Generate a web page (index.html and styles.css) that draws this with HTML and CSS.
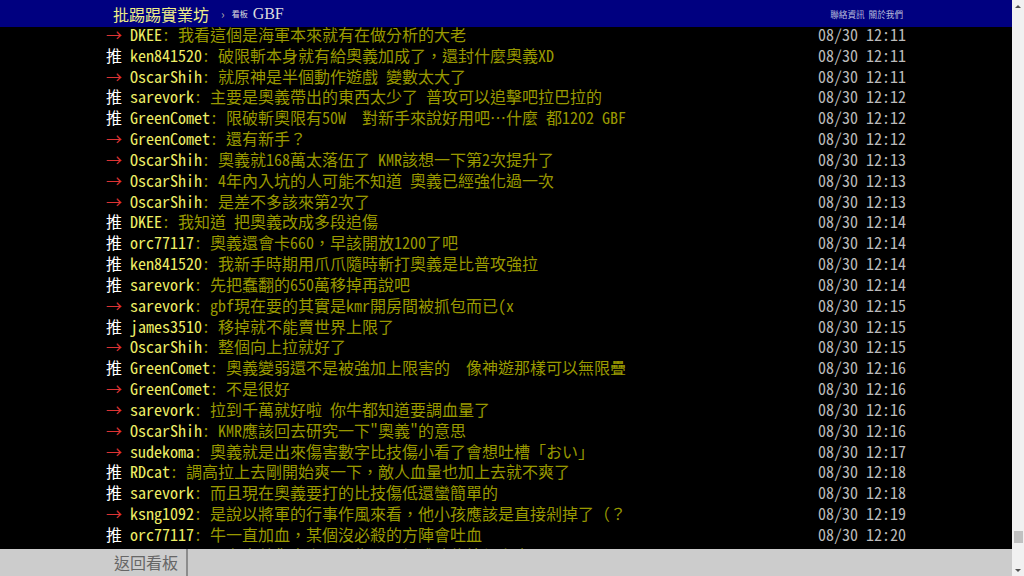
FILE: index.html
```html
<!DOCTYPE html>
<html lang="zh-Hant-TW">
<head>
  <meta charset="UTF-8">
  <meta name="viewport" content="width=device-width, initial-scale=1.0">
  <title>[閒聊] GBF 奧義 - 看板 GBF - 批踢踢實業坊</title>
  <link rel="stylesheet" href="styles.css">
</head>
<body>
  <div class="page">
    <div id="topbar-container">
      <div id="topbar">
        <a id="logo" href="#">批踢踢實業坊</a>
        <span class="sep">›</span>
        <a class="board" href="#"><span class="board-label">看板</span>GBF</a>
        <div class="right">
          <a href="#">聯絡資訊</a>
          <a href="#">關於我們</a>
        </div>
      </div>
    </div>

    <div id="main-container">
      <div id="main-content">
        <div class="push"><span class="f1 hl push-tag">→ </span><span class="f3 hl push-userid">DKEE</span><span class="f3 push-content">: 我看這個是海軍本來就有在做分析的大老</span><span class="push-ipdatetime"> 08/30 12:11</span></div>
        <div class="push"><span class="hl push-tag">推 </span><span class="f3 hl push-userid">ken841520</span><span class="f3 push-content">: 破限斬本身就有給奧義加成了，還封什麼奧義XD</span><span class="push-ipdatetime"> 08/30 12:11</span></div>
        <div class="push"><span class="f1 hl push-tag">→ </span><span class="f3 hl push-userid">OscarShih</span><span class="f3 push-content">: 就原神是半個動作遊戲 變數太大了</span><span class="push-ipdatetime"> 08/30 12:11</span></div>
        <div class="push"><span class="hl push-tag">推 </span><span class="f3 hl push-userid">sarevork</span><span class="f3 push-content">: 主要是奧義帶出的東西太少了 普攻可以追擊吧拉巴拉的</span><span class="push-ipdatetime"> 08/30 12:12</span></div>
        <div class="push"><span class="hl push-tag">推 </span><span class="f3 hl push-userid">GreenComet</span><span class="f3 push-content">: 限破斬奧限有50W  對新手來說好用吧…什麼 都1202 GBF</span><span class="push-ipdatetime"> 08/30 12:12</span></div>
        <div class="push"><span class="f1 hl push-tag">→ </span><span class="f3 hl push-userid">GreenComet</span><span class="f3 push-content">: 還有新手？</span><span class="push-ipdatetime"> 08/30 12:12</span></div>
        <div class="push"><span class="f1 hl push-tag">→ </span><span class="f3 hl push-userid">OscarShih</span><span class="f3 push-content">: 奧義就168萬太落伍了 KMR該想一下第2次提升了</span><span class="push-ipdatetime"> 08/30 12:13</span></div>
        <div class="push"><span class="f1 hl push-tag">→ </span><span class="f3 hl push-userid">OscarShih</span><span class="f3 push-content">: 4年內入坑的人可能不知道 奧義已經強化過一次</span><span class="push-ipdatetime"> 08/30 12:13</span></div>
        <div class="push"><span class="f1 hl push-tag">→ </span><span class="f3 hl push-userid">OscarShih</span><span class="f3 push-content">: 是差不多該來第2次了</span><span class="push-ipdatetime"> 08/30 12:13</span></div>
        <div class="push"><span class="hl push-tag">推 </span><span class="f3 hl push-userid">DKEE</span><span class="f3 push-content">: 我知道 把奧義改成多段追傷</span><span class="push-ipdatetime"> 08/30 12:14</span></div>
        <div class="push"><span class="hl push-tag">推 </span><span class="f3 hl push-userid">orc77117</span><span class="f3 push-content">: 奧義還會卡660，早該開放1200了吧</span><span class="push-ipdatetime"> 08/30 12:14</span></div>
        <div class="push"><span class="hl push-tag">推 </span><span class="f3 hl push-userid">ken841520</span><span class="f3 push-content">: 我新手時期用爪爪隨時斬打奧義是比普攻強拉</span><span class="push-ipdatetime"> 08/30 12:14</span></div>
        <div class="push"><span class="hl push-tag">推 </span><span class="f3 hl push-userid">sarevork</span><span class="f3 push-content">: 先把蠢翻的650萬移掉再說吧</span><span class="push-ipdatetime"> 08/30 12:14</span></div>
        <div class="push"><span class="f1 hl push-tag">→ </span><span class="f3 hl push-userid">sarevork</span><span class="f3 push-content">: gbf現在要的其實是kmr開房間被抓包而已(x</span><span class="push-ipdatetime"> 08/30 12:15</span></div>
        <div class="push"><span class="hl push-tag">推 </span><span class="f3 hl push-userid">james3510</span><span class="f3 push-content">: 移掉就不能賣世界上限了</span><span class="push-ipdatetime"> 08/30 12:15</span></div>
        <div class="push"><span class="f1 hl push-tag">→ </span><span class="f3 hl push-userid">OscarShih</span><span class="f3 push-content">: 整個向上拉就好了</span><span class="push-ipdatetime"> 08/30 12:15</span></div>
        <div class="push"><span class="hl push-tag">推 </span><span class="f3 hl push-userid">GreenComet</span><span class="f3 push-content">: 奧義變弱還不是被強加上限害的  像神遊那樣可以無限疊</span><span class="push-ipdatetime"> 08/30 12:16</span></div>
        <div class="push"><span class="f1 hl push-tag">→ </span><span class="f3 hl push-userid">GreenComet</span><span class="f3 push-content">: 不是很好</span><span class="push-ipdatetime"> 08/30 12:16</span></div>
        <div class="push"><span class="f1 hl push-tag">→ </span><span class="f3 hl push-userid">sarevork</span><span class="f3 push-content">: 拉到千萬就好啦 你牛都知道要調血量了</span><span class="push-ipdatetime"> 08/30 12:16</span></div>
        <div class="push"><span class="f1 hl push-tag">→ </span><span class="f3 hl push-userid">OscarShih</span><span class="f3 push-content">: KMR應該回去研究一下"奧義"的意思</span><span class="push-ipdatetime"> 08/30 12:16</span></div>
        <div class="push"><span class="f1 hl push-tag">→ </span><span class="f3 hl push-userid">sudekoma</span><span class="f3 push-content">: 奧義就是出來傷害數字比技傷小看了會想吐槽「おい」</span><span class="push-ipdatetime"> 08/30 12:17</span></div>
        <div class="push"><span class="hl push-tag">推 </span><span class="f3 hl push-userid">RDcat</span><span class="f3 push-content">: 調高拉上去剛開始爽一下，敵人血量也加上去就不爽了</span><span class="push-ipdatetime"> 08/30 12:18</span></div>
        <div class="push"><span class="hl push-tag">推 </span><span class="f3 hl push-userid">sarevork</span><span class="f3 push-content">: 而且現在奧義要打的比技傷低還蠻簡單的</span><span class="push-ipdatetime"> 08/30 12:18</span></div>
        <div class="push"><span class="f1 hl push-tag">→ </span><span class="f3 hl push-userid">ksng1092</span><span class="f3 push-content">: 是說以將軍的行事作風來看，他小孩應該是直接剁掉了（？</span><span class="push-ipdatetime"> 08/30 12:19</span></div>
        <div class="push"><span class="hl push-tag">推 </span><span class="f3 hl push-userid">orc77117</span><span class="f3 push-content">: 牛一直加血，某個沒必殺的方陣會吐血</span><span class="push-ipdatetime"> 08/30 12:20</span></div>
        <div class="push"><span class="f1 hl push-tag">→ </span><span class="f3 hl push-userid">sarevork</span><span class="f3 push-content">: 現在奧義傷害上限要靠石頭加成才能拉得上去吧</span><span class="push-ipdatetime"> 08/30 12:20</span></div>
      </div>
    </div>

    <div id="navigation-container">
      <div id="navigation">
        <a class="board" href="#">返回看板</a>
        <div class="bar"></div>
      </div>
    </div>
  </div>

  <div class="scrollbar">
    <div class="arrow up"></div>
    <div class="track"><div class="thumb"></div></div>
    <div class="arrow down"></div>
  </div>
</body>
</html>
```

FILE: styles.css
```css
* {
  box-sizing: border-box;
  margin: 0;
  padding: 0;
}
html, body {
  height: 100%;
}
body {
  background-color: #000;
  color: #ccc;
  font-family: "Noto Sans Mono CJK TC", "Noto Sans CJK TC", monospace;
  font-size: 16px;
  display: flex;
  overflow: hidden;
}
a {
  text-decoration: none;
  color: inherit;
}
.page {
  flex: 1;
  min-width: 0;
  display: flex;
  flex-direction: column;
}

/* topbar */
#topbar-container {
  background-color: #000080;
  height: 27px;
  flex: none;
}
#topbar {
  width: 800px;
  height: 27px;
  margin: 0 auto;
  display: flex;
  align-items: center;
}
#logo {
  color: #eeee88;
  font-size: 16px;
  padding: 0 8px 0 7px;
}
#topbar .sep {
  color: #aaa;
  font-size: 12px;
  margin: 0 7px 0 4px;
}
#topbar .board {
  color: #ddd;
  font-family: "Liberation Serif", serif;
  font-size: 16px;
}
#topbar .board-label {
  font-family: "Noto Sans CJK TC", sans-serif;
  font-size: 8px;
  vertical-align: 2px;
  margin-right: 5px;
}
#topbar .right {
  margin-left: auto;
  padding-right: 3px;
  display: flex;
  gap: 4px;
  font-family: "Noto Sans CJK TC", sans-serif;
  font-size: 8.6px;
  color: #b8bcdc;
}

/* pushes */
#main-container {
  flex: 1;
  overflow: hidden;
}
#main-content {
  width: 800px;
  margin: -3px auto 0;
}
.push {
  display: flex;
  white-space: pre;
  line-height: 20.83px;
  height: 20.83px;
}
.push-ipdatetime {
  margin-left: auto;
  color: #bbb;
}
.hl {
  color: #fff;
}
.f1.hl {
  color: #d33;
}
.f3 {
  color: #990;
}
.f3.hl {
  color: #ee6;
}

/* bottom */
#navigation-container {
  background-color: #ccc;
  height: 27px;
  flex: none;
}
#navigation {
  width: 800px;
  height: 27px;
  margin: 0 auto;
  display: flex;
}
#navigation .board {
  color: #666;
  font-family: "Noto Sans CJK TC", sans-serif;
  font-size: 16px;
  line-height: 27px;
  padding: 0 8px;
  border-right: 2px solid #8c8c8c;
}

/* scrollbar */
.scrollbar {
  width: 12px;
  flex: none;
  background-color: #f1f1f1;
  display: flex;
  flex-direction: column;
}
.arrow {
  height: 12px;
  display: flex;
  align-items: center;
  justify-content: center;
}
.arrow::before {
  content: "";
  border-left: 3px solid transparent;
  border-right: 3px solid transparent;
}
.arrow.up::before {
  border-bottom: 3px solid #505050;
}
.arrow.down::before {
  border-top: 3px solid #505050;
}
.track {
  flex: 1;
  display: flex;
  flex-direction: column;
  justify-content: flex-end;
  align-items: center;
  padding-bottom: 21px;
}
.thumb {
  width: 9px;
  height: 12px;
  background-color: #c1c1c1;
}
```
